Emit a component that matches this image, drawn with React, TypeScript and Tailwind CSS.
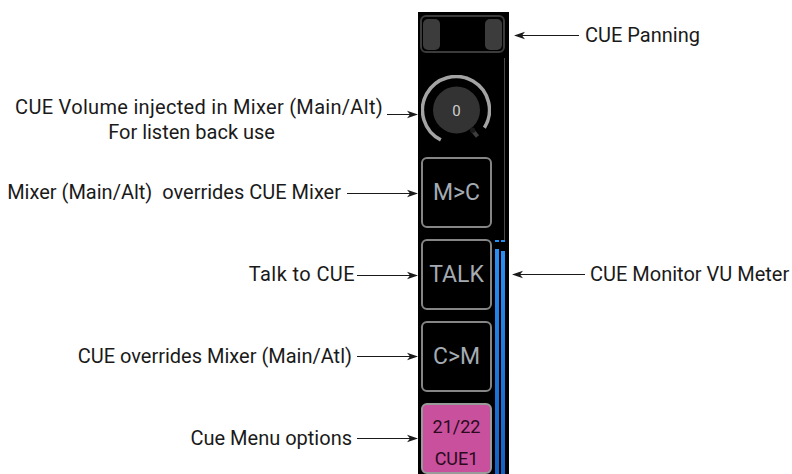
import React from "react";

function ArrowRight({ w }: { w: number }) {
  return (
    <svg width={w} height={9} viewBox={`0 0 ${w} 9`} className="block shrink-0">
      <line x1={0} y1={4.5} x2={w - 6} y2={4.5} stroke="#1a1a1a" strokeWidth={1} />
      <polygon points={`${w},4.5 ${w - 11},0.8 ${w - 8},4.5 ${w - 11},8.2`} fill="#1a1a1a" />
    </svg>
  );
}

function ArrowLeft({ w }: { w: number }) {
  return (
    <svg width={w} height={9} viewBox={`0 0 ${w} 9`} className="block shrink-0">
      <line x1={6} y1={4.5} x2={w} y2={4.5} stroke="#1a1a1a" strokeWidth={1} />
      <polygon points={`0,4.5 11,0.8 8,4.5 11,8.2`} fill="#1a1a1a" />
    </svg>
  );
}

function Knob() {
  return (
    <svg width={70} height={70} viewBox="0 0 70 70" className="block">
      <path d="M19.8 64.85 A33.5 33.5 0 1 1 63.4 52.75" fill="none" stroke="#a3a3a3" strokeWidth={3.5} />
      <circle cx={35.5} cy={35} r={23.5} fill="#333333" />
      <line x1={52} y1={56} x2={56.5} y2={61.5} stroke="#3e3e3e" strokeWidth={4} />
      <circle cx={51.6} cy={55.2} r={2.6} fill="#1a1a1a" />
      <text
        x={35.5}
        y={40.5}
        textAnchor="middle"
        fontSize={15}
        fill="#d0d0d0"
        fontFamily="Roboto, 'Noto Sans', sans-serif"
      >
        0
      </text>
    </svg>
  );
}

function StripButton({ label }: { label: string }) {
  return (
    <div className="h-[71px] w-[71px] rounded-[6px] border-2 border-[#858585] bg-black flex items-center justify-center">
      <span className="text-[23px] leading-none text-[#a4abb3]">{label}</span>
    </div>
  );
}

const labelCls = "text-[20px] leading-[25px] text-[#1a1a1a] whitespace-nowrap";

export default function App() {
  return (
    <div
      className="w-[792px] h-[474px] overflow-hidden bg-white flex"
      style={{ fontFamily: "Roboto, 'Noto Sans', Arial, sans-serif" }}
    >
      {/* Left labels */}
      <div className="w-[418px] shrink-0 flex flex-col">
        <div className="h-[75px]" />
        <div className="h-[82px] flex justify-end items-start">
          <div className="pt-[20px] flex flex-col items-center">
            <span className={labelCls + " tracking-[0.3px]"}>CUE Volume injected in Mixer (Main/Alt)</span>
            <span className={labelCls + " pr-[15px]"}>For listen back use</span>
          </div>
          <div className="mt-[35px] ml-[4px]">
            <ArrowRight w={31} />
          </div>
        </div>
        <div className="flex flex-col gap-[11px]">
          <div className="h-[71px] flex justify-end items-center">
            <span className={labelCls}>Mixer (Main/Alt)&nbsp; overrides CUE Mixer</span>
            <div className="ml-[6px] mt-[2px]">
              <ArrowRight w={71} />
            </div>
          </div>
          <div className="h-[71px] flex justify-end items-center">
            <span className={labelCls + " tracking-[0.4px]"}>Talk to CUE</span>
            <div className="ml-[2px] mt-[1px]">
              <ArrowRight w={61} />
            </div>
          </div>
          <div className="h-[71px] flex justify-end items-center">
            <span className={labelCls}>CUE overrides Mixer (Main/Atl)</span>
            <div className="ml-[5px]">
              <ArrowRight w={61} />
            </div>
          </div>
          <div className="h-[71px] flex justify-end items-center">
            <span className={labelCls}>Cue Menu options</span>
            <div className="ml-[5px]">
              <ArrowRight w={61} />
            </div>
          </div>
        </div>
      </div>

      {/* Strip */}
      <div className="w-[91px] shrink-0 mt-[12px] h-[470px] bg-black pt-[3px] pl-[2px] flex flex-col">
        <div className="w-[85px] h-[38px] rounded-[6px] border-2 border-[#3b3b3b] flex justify-between items-center px-[1px]">
          <div className="w-[17px] h-[31px] rounded-[5px] bg-[#3c3c3c]" />
          <div className="w-[17px] h-[31px] rounded-[5px] bg-[#3c3c3c]" />
        </div>
        <div className="mt-[5px] flex flex-1">
          <div className="ml-[1px] w-[71px] flex flex-col">
            <div className="pt-[17px] pb-[12px]">
              <Knob />
            </div>
            <div className="flex flex-col gap-[11px]">
              <StripButton label="M>C" />
              <StripButton label="TALK" />
              <StripButton label="C>M" />
              <div className="h-[71px] w-[71px] rounded-[6px] border-2 border-[#9a9a9a] bg-[#c8509c] flex flex-col items-center justify-start pt-[13px] gap-[14px]">
                <span className="text-[18px] leading-none text-[#2a0a1c]">21/22</span>
                <span className="text-[18px] leading-none text-[#2a0a1c]">CUE1</span>
              </div>
            </div>
          </div>
          {/* VU meter */}
          <div className="ml-[3px] w-[11px] flex flex-col">
            <div className="h-[182px] flex justify-end pr-[1px]">
              <div className="w-px h-full bg-[#4a4a4a]" />
            </div>
            <div className="flex gap-[2px] h-[2px]">
              <div className="w-[4px] bg-[#2390f2]" />
              <div className="w-[4px] bg-[#2390f2]" />
            </div>
            <div className="mt-[7px] flex gap-[2px] flex-1 items-stretch">
              <div className="w-[4px] bg-gradient-to-b from-[#2a8ff5] to-[#1560c2]" />
              <div className="w-[4px] mt-[2px] bg-gradient-to-b from-[#2a8ff5] to-[#1560c2]" />
            </div>
          </div>
        </div>
      </div>

      {/* Right labels */}
      <div className="flex-1 flex flex-col">
        <div className="h-[70px] flex items-center">
          <div className="ml-[5px] mt-[1px]">
            <ArrowLeft w={65} />
          </div>
          <span className={labelCls + " ml-[6px]"}>CUE Panning</span>
        </div>
        <div className="h-[169px]" />
        <div className="h-[71px] flex items-center">
          <div className="ml-[3px]">
            <ArrowLeft w={73} />
          </div>
          <span className={labelCls + " ml-[5px]"}>CUE Monitor VU Meter</span>
        </div>
      </div>
    </div>
  );
}
